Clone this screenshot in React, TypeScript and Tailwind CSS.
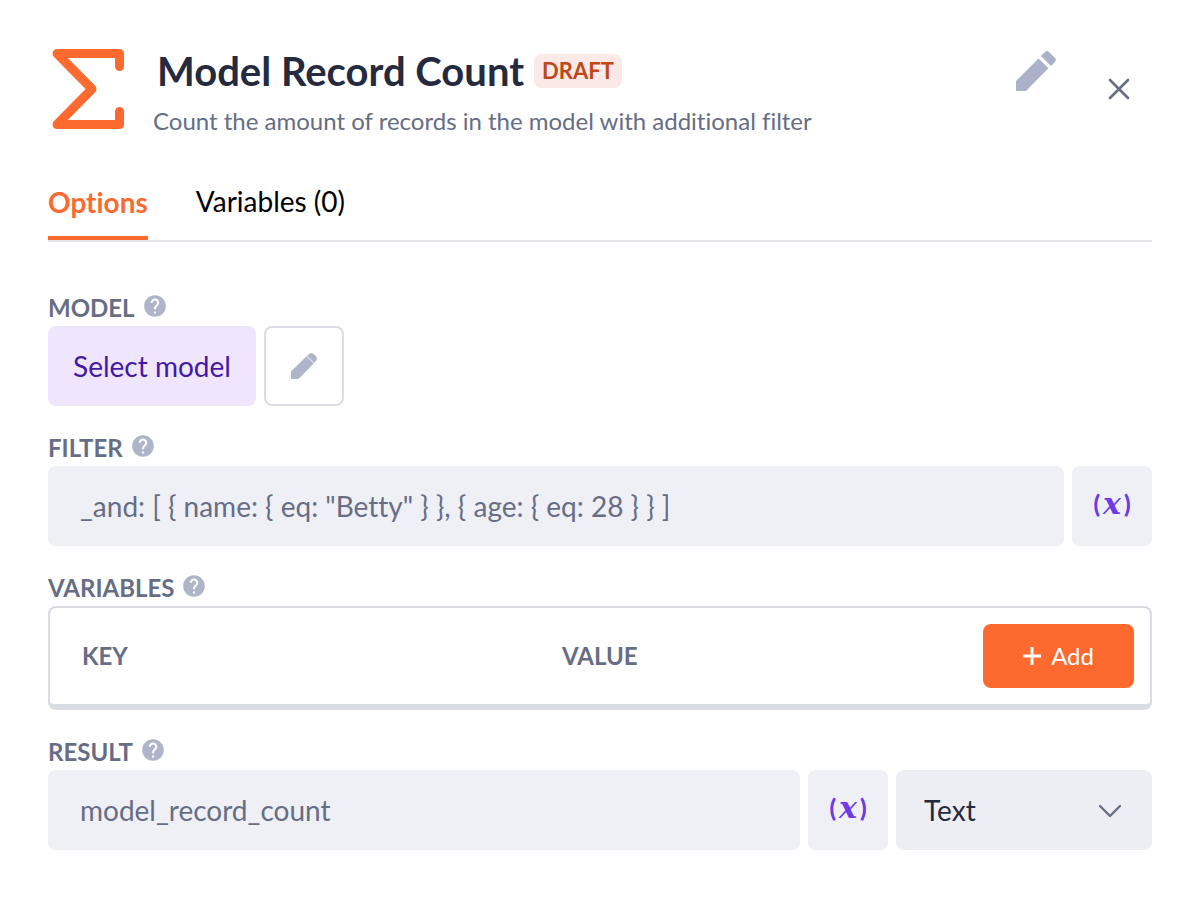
import React, { useState } from "react";
import { MdHelp } from "react-icons/md";

function PencilIcon({ className }: { className: string }) {
  return (
    <svg viewBox="0 0 40 40" className={className} fill="currentColor" aria-hidden="true">
      <path d="M0 30 22.6 7.4 32.4 17.2 10 40H0Z" />
      <path d="M25 5 28.8 1.2Q31 -1 33.2 1.2L38.8 6.8Q41 9 38.8 11.2L35 15Z" />
    </svg>
  );
}

function SolidPencilIcon({ className }: { className: string }) {
  return (
    <svg viewBox="0 0 40 40" className={className} fill="currentColor" aria-hidden="true">
      <path d="M0 28.5 23.9 5.1 34.9 16.1 11.5 40H0Z" />
      <path d="M24.6 4.4 28 1.5Q31.5 -1.2 35 1.5L38.5 5Q41.2 8.5 38.5 12L35.6 15.4Z" />
    </svg>
  );
}

function SigmaIcon() {
  return (
    <svg
      viewBox="0 0 80 82"
      className="h-[82px] w-20 shrink-0"
      fill="none"
      stroke="currentColor"
      strokeWidth="9"
      strokeLinecap="round"
      strokeLinejoin="round"
      aria-hidden="true"
    >
      <path d="M71.5 18.5V5.5H9L44 41 9 76.5H71.5V63.5" />
    </svg>
  );
}

function FieldLabel({ htmlFor, text }: { htmlFor: string; text: string }) {
  return (
    <div className="flex h-9 items-center gap-[7px]">
      <label htmlFor={htmlFor} className="text-2xl font-bold uppercase">
        {text}
      </label>
      <button type="button" aria-label={`Help for ${text}`} className="mb-1 text-[#afb5c8]">
        <MdHelp className="size-[26px]" />
      </button>
    </div>
  );
}

function VariableButton() {
  return (
    <button
      type="button"
      aria-label="Insert variable"
      className="flex size-20 shrink-0 items-center justify-center gap-[3px] rounded-lg bg-[#eff0f5] pb-1 text-2xl font-black text-[#6d3be8]"
    >
      <span>(</span>
      <span className="font-['DejaVu_Serif',serif] text-[30px] leading-8 font-bold italic">x</span>
      <span>)</span>
    </button>
  );
}

const inputClass =
  "h-20 min-w-0 flex-1 rounded-lg bg-[#eff0f5] px-8 text-[28px] outline-none placeholder:text-[#666d85] placeholder:opacity-100";

export default function App() {
  const [type, setType] = useState("Text");
  return (
    <main className="bg-white px-12 pt-12 pb-[52px] font-[Lato,sans-serif] text-[#666d85] [font-variant-ligatures:none]">
      <header className="flex items-start">
        <div className="text-[#fc6a2f]">
          <SigmaIcon />
        </div>
        <div className="ml-[25px] min-w-0 flex-1">
          <div className="flex h-[46px] items-center gap-[10px] pl-1">
            <h1 className="text-[40px] leading-[46px] font-bold text-[#262a3f]">Model Record Count</h1>
            <span className="rounded-lg bg-[#fbe9e7] px-2 text-[22px] leading-[34px] font-bold text-[#bf4718]">
              DRAFT
            </span>
          </div>
          <p className="mt-2 text-2xl leading-[38px]">Count the amount of records in the model with additional filter</p>
        </div>
        <button type="button" aria-label="Edit" className="mt-[3px] text-[#abb1c8]">
          <PencilIcon className="size-10" />
        </button>
        <button type="button" aria-label="Close" className="mt-7 mr-5 ml-[50px]">
          <svg viewBox="0 0 26 26" className="size-[26px]" stroke="currentColor" strokeWidth="2.6" strokeLinecap="round" aria-hidden="true">
            <path d="M4 4 22 22M22 4 4 22" />
          </svg>
        </button>
      </header>

      <nav className="mt-[30px] flex gap-12 border-b-2 border-[#e5e6eb] text-[28px] leading-10">
        <button type="button" className="border-b-4 border-[#fc6a2f] pt-3 pb-[14px] font-bold text-[#fc6a2f]">
          Options
        </button>
        <button type="button" className="border-b-4 border-transparent pt-[11px] pb-[15px] text-black">
          Variables (0)
        </button>
      </nav>

      <form className="mt-12 flex flex-col gap-6">
        <div>
          <FieldLabel htmlFor="model" text="Model" />
          <div className="flex gap-2">
            <button id="model" type="button" className="h-20 w-52 rounded-lg bg-[#efe6fd] text-[28px] text-[#4318a8]">
              Select model
            </button>
            <button
              type="button"
              aria-label="Edit model"
              className="flex size-20 items-center justify-center rounded-lg border-2 border-[#dadde4] text-[#afb5c8]"
            >
              <SolidPencilIcon className="size-[26px]" />
            </button>
          </div>
        </div>

        <div>
          <FieldLabel htmlFor="filter" text="Filter" />
          <div className="flex gap-2">
            <input
              id="filter"
              type="text"
              placeholder={'_and: [ { name: { eq: "Betty" } }, { age: { eq: 28 } } ]'}
              className={inputClass}
            />
            <VariableButton />
          </div>
        </div>

        <div>
          <FieldLabel htmlFor="add-variable" text="Variables" />
          <div className="rounded-lg border-2 border-b-[6px] border-[#d9dce3]">
            <table className="w-full table-fixed text-left text-2xl">
              <thead>
                <tr>
                  <th className="pl-8 font-bold">KEY</th>
                  <th className="pl-8 font-bold">VALUE</th>
                  <td className="w-[140px] py-4 pr-4">
                    <div className="flex justify-end">
                      <button
                        id="add-variable"
                        type="button"
                        className="flex h-16 shrink-0 items-center gap-[10px] rounded-lg bg-[#fc6a2f] px-10 text-white"
                      >
                        <svg viewBox="0 0 18 18" className="size-[18px]" stroke="currentColor" strokeWidth="3" aria-hidden="true">
                          <path d="M9 0V18M0 9H18" />
                        </svg>
                        Add
                      </button>
                    </div>
                  </td>
                </tr>
              </thead>
            </table>
          </div>
        </div>

        <div>
          <FieldLabel htmlFor="result" text="Result" />
          <div className="flex gap-2">
            <input id="result" type="text" placeholder="model_record_count" className={inputClass} />
            <VariableButton />
            <div className="relative w-64 shrink-0">
              <select
                aria-label="Result type"
                value={type}
                onChange={(e) => setType(e.target.value)}
                className="h-20 w-full appearance-none rounded-lg bg-[#edeef4] px-7 text-[28px] text-[#262a3f]"
              >
                <option>Text</option>
                <option>Number</option>
              </select>
              <svg
                viewBox="0 0 24 14"
                className="pointer-events-none absolute top-[34px] right-[30px] h-[14px] w-6"
                fill="none"
                stroke="currentColor"
                strokeWidth="2.4"
                strokeLinecap="round"
                strokeLinejoin="round"
                aria-hidden="true"
              >
                <path d="M2 2 12 12 22 2" />
              </svg>
            </div>
          </div>
        </div>
      </form>
    </main>
  );
}
